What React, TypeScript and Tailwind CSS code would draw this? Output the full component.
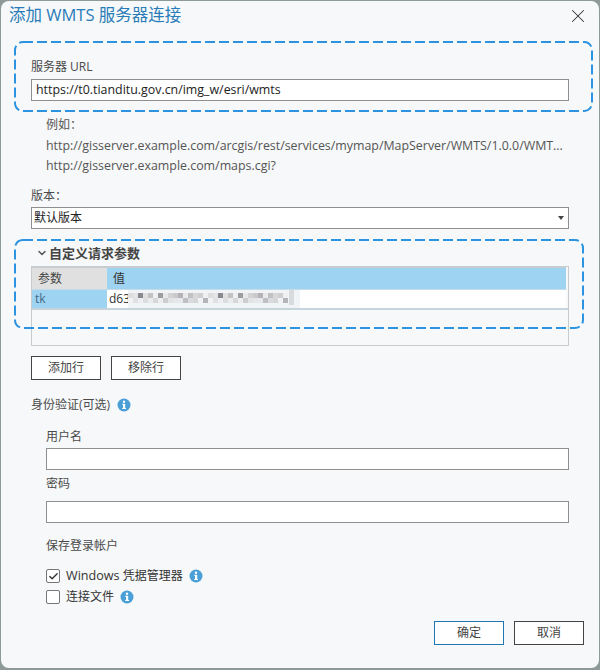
import { X, ChevronDown, Check } from 'lucide-react'

const sans = 'font-["Open_Sans","Noto_Sans_CJK_SC",sans-serif]'

// pixelated blur over the token value
const mosaicTones = ['#d8d8da', '#e6e6e8', '#c9c7c9', '#efeff0', '#b9b7ba', '#dcdcdc', '#a9a6aa', '#e3e1e1', '#cfcdcd', '#f0eeee', '#8f8c92', '#d3d2d4', '#bdb9bb', '#e9e8e8', '#77747b', '#c4c1c4']
const mosaicCols = Array.from({ length: 32 }, (_, i) => i)

function InfoIcon() {
    return (
        <svg width="14" height="14" viewBox="0 0 14 14" className="shrink-0">
            <circle cx="7" cy="7" r="6.5" fill="#4a9fd6" />
            <rect x="6" y="5.8" width="2.2" height="5" fill="#fff" />
            <rect x="5.2" y="5.8" width="1" height="1" fill="#fff" />
            <rect x="5.2" y="10" width="3.8" height="1" fill="#fff" />
            <circle cx="7" cy="3.7" r="1.2" fill="#fff" />
        </svg>
    )
}

function Input({ value, className }: { value?: string; className: string }) {
    return (
        <div className={`flex h-[22px] items-center border border-[#8f8f8f] bg-white px-1 text-[12.4px] text-[#222] ${className}`}>
            {value}
        </div>
    )
}

function Button({ label, className }: { label: string; className: string }) {
    return (
        <div className={`flex h-6 w-[70px] items-center justify-center border bg-white text-[12px] text-[#444] ${className}`}>
            {label}
        </div>
    )
}

function DashedBox({ className, w, h }: { className: string; w: number; h: number }) {
    return (
        <svg width={w} height={h} className={`pointer-events-none absolute ${className}`}>
            <rect x="1" y="1" width={w - 2} height={h - 2} rx="8" fill="none" stroke="#2b93e0" strokeWidth="2" strokeDasharray="10 4" />
        </svg>
    )
}

export default function App() {
    return (
        <div className={`${sans} h-[670px] w-[600px] bg-[#8e9a98] p-[1px] pb-[2px]`}>
            <div className="relative flex h-full flex-col rounded-[8px] bg-[#f6f8f9] text-[12px] text-[#4a4a4a]">
                {/* title */}
                <div className="flex h-[29px] items-center justify-between pl-2 pr-[10px]">
                    <span className="text-[16.5px] text-[#2a7cb8]">添加 WMTS 服务器连接</span>
                    <X className="h-[22px] w-[22px] text-[#333]" strokeWidth={1.1} />
                </div>

                <div className="flex flex-col px-[30px]">
                    <label className="mt-[29px] leading-[16px]">服务器 URL</label>
                    <Input value="https://t0.tianditu.gov.cn/img_w/esri/wmts" className="mt-[4px]" />

                    <div className="ml-[15px] mt-[14px] flex flex-col text-[12.4px] leading-[20px] text-[#555]">
                        <span className="text-[12px]">例如：</span>
                        <span className="mt-px whitespace-nowrap">http://gisserver.example.com/arcgis/rest/services/mymap/MapServer/WMTS/1.0.0/WMT...</span>
                        <span>http://gisserver.example.com/maps.cgi?</span>
                    </div>

                    <label className="mt-[12px] leading-[16px]">版本：</label>
                    <div className="mt-[3px] flex h-[22px] items-center justify-between border border-[#8f8f8f] bg-white pl-[2px] pr-[2px] text-[#222]">
                        <span>默认版本</span>
                        <span className="mr-[2px] h-0 w-0 border-x-[3px] border-t-[4px] border-x-transparent border-t-[#444]" />
                    </div>

                    <div className="ml-[5px] mt-[14px] flex items-center gap-[1px] text-[13px] font-semibold leading-[20px] text-[#444]">
                        <ChevronDown className="h-3 w-3 text-[#555]" strokeWidth={3} />
                        <span>自定义请求参数</span>
                    </div>

                    {/* params table */}
                    <div className="mt-[3px] flex h-[80px] flex-col border border-[#c6cccf]">
                        <div className="mr-[2px] flex h-[22px] border-t border-[#c6cccf]">
                            <div className="flex w-[75px] items-center bg-[#e0e0e0] pl-[6px] text-[#444]">参数</div>
                            <div className="flex flex-1 items-center bg-[#9fd3f2] pl-[6px] text-[#333]">值</div>
                        </div>
                        <div className="mr-[2px] flex h-[19px] border-t border-[#c6dbe8]">
                            <div className="flex w-[75px] items-center bg-[#9fd3f2] pl-[3px] text-[#3f6a86]">tk</div>
                            <div className="relative flex flex-1 items-center bg-white pl-[2px] text-[#333]">
                                <span>d63</span>
                                <svg width="172" height="18" className="absolute left-[21px] top-0">
                                    <rect width="172" height="18" fill="#f1f4f7" />
                                    {mosaicCols.map((i) => (
                                        <g key={i}>
                                            <rect x={i * 5} y="3" width="5" height="5" fill={mosaicTones[(i * 7) % 16]} opacity="0.85" />
                                            <rect x={i * 5} y="8" width="5" height="5" fill={mosaicTones[(i * 5 + 3) % 16]} opacity="0.5" />
                                        </g>
                                    ))}
                                    <rect x="161" y="0" width="5" height="15" fill="#d8dadc" />
                                </svg>
                            </div>
                        </div>
                        <div className="h-[3px] border-t-2 border-[#c6d4dc]" />
                    </div>

                    <div className="mt-[10px] flex gap-[10px]">
                        <Button label="添加行" className="border-[#444]" />
                        <Button label="移除行" className="border-[#444]" />
                    </div>

                    <div className="mt-[17px] flex items-center gap-[7px] leading-[16px]">
                        <span>身份验证(可选)</span>
                        <InfoIcon />
                    </div>

                    <div className="ml-[15px] flex flex-col">
                        <label className="mt-[16px] leading-[16px]">用户名</label>
                        <Input className="mt-[3px]" />
                        <label className="mt-[6px] leading-[16px]">密码</label>
                        <Input className="mt-[9px]" />
                        <label className="mt-[15px] leading-[16px]">保存登录帐户</label>

                        <div className="mt-[14px] flex items-center gap-[6px] text-[12px] leading-[16px] text-[#333]">
                            <span className="flex h-[14px] w-[14px] items-center justify-center rounded-[2px] border border-[#777] bg-white">
                                <Check className="h-[11px] w-[11px] text-[#333]" strokeWidth={3} />
                            </span>
                            <span><span className="text-[12.6px]">Windows</span> 凭据管理器</span>
                            <InfoIcon />
                        </div>
                        <div className="mt-[5px] flex items-center gap-[6px] text-[12px] leading-[16px] text-[#333]">
                            <span className="h-[14px] w-[14px] rounded-[2px] border border-[#777] bg-white" />
                            <span>连接文件</span>
                            <InfoIcon />
                        </div>
                    </div>
                </div>

                <div className="mt-[16px] flex justify-end gap-[10px] pr-[15px]">
                    <Button label="确定" className="border-[#1f78b4]" />
                    <Button label="取消" className="border-[#444]" />
                </div>

                {/* annotation boxes drawn over the dialog */}
                <DashedBox className="left-[13px] top-[40px]" w={579} h={71} />
                <DashedBox className="left-[13px] top-[238px]" w={570} h={90} />
            </div>
        </div>
    )
}
